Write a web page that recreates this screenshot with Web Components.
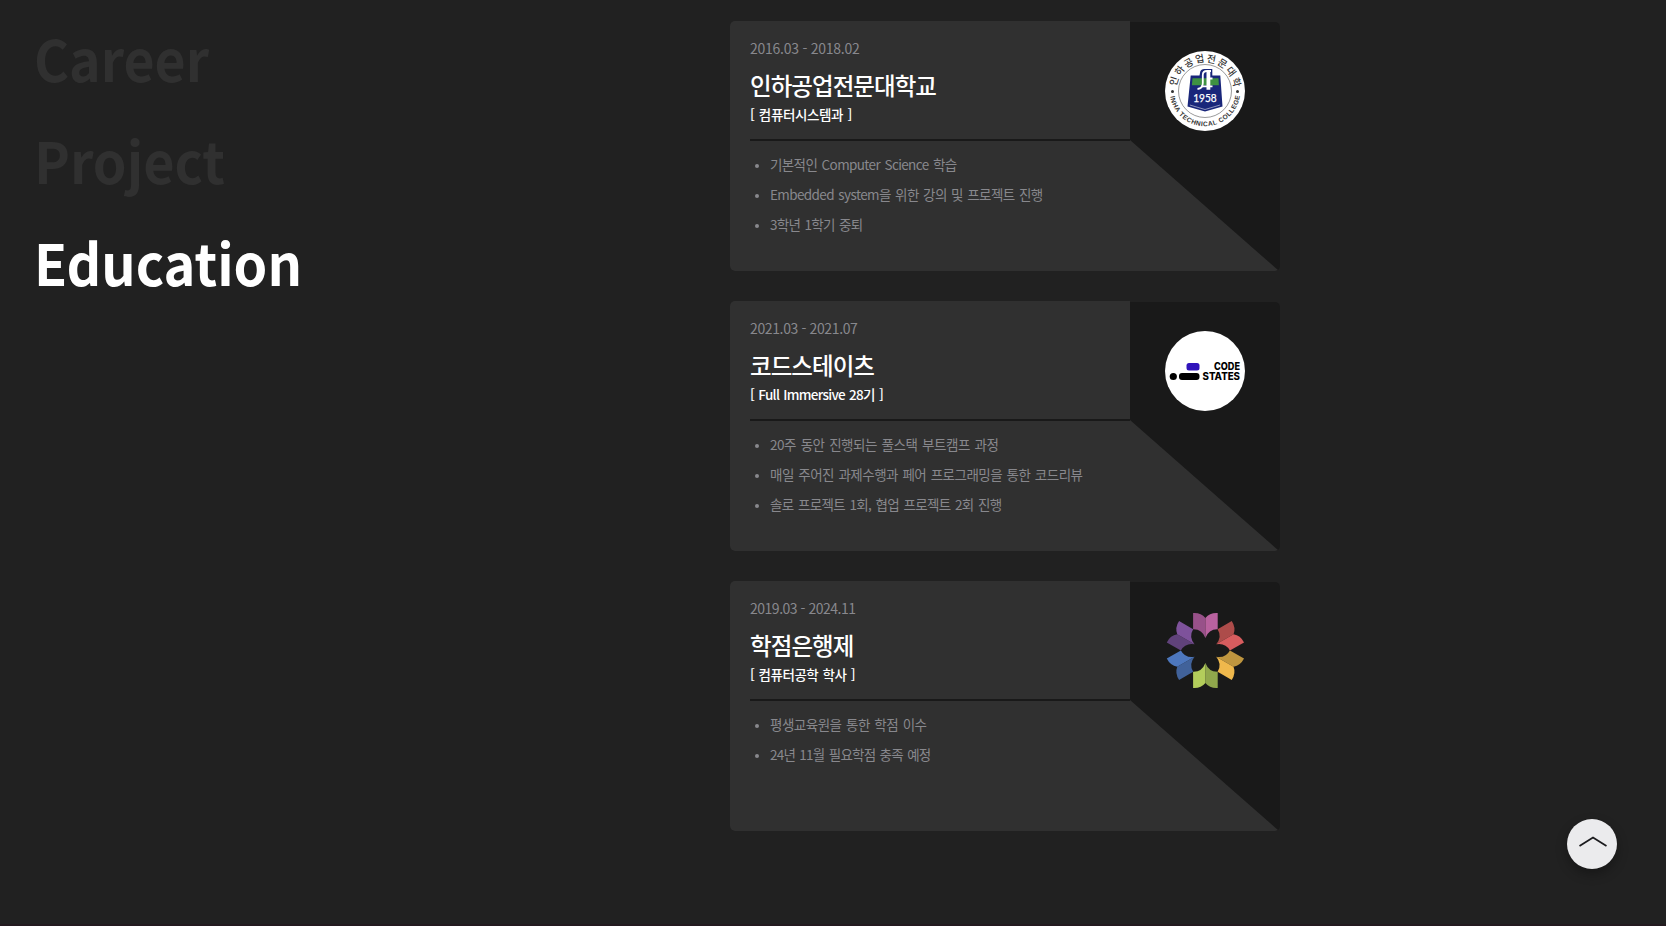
<!DOCTYPE html>
<html lang="ko">
<head>
<meta charset="utf-8">
<title>Education</title>
<style>
html,body{margin:0;height:100%;overflow:hidden;background:#212121;font-family:"Noto Sans CJK KR","Noto Sans",sans-serif}
</style>
</head>
<body>
<resume-page></resume-page>
<script>
const define = (name, html, setup) => {
  const t = document.createElement('template');
  t.innerHTML = html;
  customElements.define(name, class extends HTMLElement {
    constructor() { super(); this.attachShadow({mode: 'open'}).append(t.content.cloneNode(true)); }
    connectedCallback() { if (setup) setup(this, this.shadowRoot); }
  });
};

// One line of text that fills the width given in `w`, by tracking or, with `scale`, by scaling.
define('fit-text', `<style>:host{display:block;white-space:nowrap;line-height:inherit}span{display:inline-block;transform-origin:0 50%}</style><span><slot></slot></span>`, (el, root) => {
  const s = root.querySelector('span'), w = +el.getAttribute('w');
  const natural = s.getBoundingClientRect().width;
  if (el.hasAttribute('scale')) s.style.transform = `scaleX(${(w / natural).toFixed(4)})`;
  else s.style.letterSpacing = ((w - natural) / [...el.textContent].length).toFixed(3) + 'px';
});

define('nav-item', `<style>
:host{display:block;height:102px;line-height:102px;font-size:57px;font-weight:700;color:#303030}
:host([active]){color:#fff}
</style><slot></slot>`);

define('side-nav', `<style>:host{display:block;width:730px;box-sizing:border-box;padding:6px 0 0 34px}</style>
<nav><nav-item><fit-text scale w="175">Career</fit-text></nav-item>
<nav-item><fit-text scale w="191">Project</fit-text></nav-item>
<nav-item active><fit-text scale w="268">Education</fit-text></nav-item></nav>`);

define('edu-card', `<style>
:host{display:block;position:relative;width:550px;height:250px}
.dark{position:absolute;inset:1px 0 0 0;background:#191919;border-radius:5px}
.face{position:absolute;inset:0;background:#303030;border-radius:5px;clip-path:polygon(0 0,400px 0,400px 119px,549px 250px,0 250px)}
.body{position:relative;display:grid;grid-template-columns:400px 150px}
.head{height:118px;margin-left:20px;border-bottom:2px solid #191919;color:#fff;display:flex;flex-direction:column}
.date{font-size:14px;line-height:20px;margin-top:17px;color:#88888d}
.title{font-size:23.500px;line-height:36px;font-weight:500;margin-top:9px}
.sub{font-size:13.500px;line-height:20px;font-weight:500;margin-top:1px;word-spacing:1px}
.logo{display:flex;justify-content:center;padding-top:30px}
.list{padding:8px 0 0 25px}
</style><div class="dark"></div><div class="face"></div>
<div class="body"><div class="head"><div class="date"><slot name="date"></slot></div><div class="title"><slot name="title"></slot></div><div class="sub"><slot name="sub"></slot></div></div>
<div class="logo"><slot name="logo"></slot></div><div class="list"><slot></slot></div></div>`);

define('edu-point', `<style>
:host{display:flex;align-items:center;height:30px;line-height:30px;font-size:13.500px;word-spacing:1.200px;color:#88888d}
i{width:4px;height:4px;border-radius:50%;background:currentColor;margin:3px 11px 0 0}
</style><i></i><slot></slot>`);

define('logo-inha', `<style>:host{display:block;width:80px;height:80px}svg{display:block}</style>
<svg width="80" height="80" viewBox="0 0 80 80">
<circle cx="40" cy="40" r="40" fill="#fff"/><circle cx="40" cy="40" r="26.500" fill="none" stroke="#555" stroke-width=".6"/>
<defs><path id="up" d="M11 40a29 29 0 0 1 58 0"/><path id="lo" d="M4.800 40a35.200 35.200 0 0 0 70.400 0"/></defs>
<g fill="#333">
<text font-size="9.800" font-weight="500" font-family="Noto Sans CJK KR,sans-serif"><textPath href="#up" startOffset="4.500" textLength="83" lengthAdjust="spacing">인하공업전문대학</textPath></text>
<text font-size="6.600" font-weight="700" font-family="Liberation Sans,sans-serif"><textPath href="#lo" startOffset="5.500" textLength="100" lengthAdjust="spacing">INHA TECHNICAL COLLEGE</textPath></text></g>
<circle cx="7.500" cy="40.500" r="1.500" fill="#333"/><circle cx="72.500" cy="40.500" r="1.500" fill="#333"/>
<path d="M25.700 24.600h8.800l.8-4q.8-2.600 4-2.600h8v6.600h8l2.200 31-17.500 5-17.500-5z" fill="#19267a"/>
<path d="M27.500 27.200h26l.4 7h-27z" fill="#3e9142"/>
<path d="M24.800 54l15.200 4.500 15.200-4.500" fill="none" stroke="#fff" stroke-width=".5"/>
<path d="M46 20h-4q-4.200 0-4.200 4v8q0 5.500-5.300 6" fill="none" stroke="#fff" stroke-width="1.800"/>
<path d="M41.500 20h3.800v6.500h2.200v2h-2.200v6h2.200v1.800h-2.200v2.500h-3.800v-2.500H36v-1.800h5.500z" fill="#fff"/>
<text x="28.200" y="50.800" font-size="11.500" textLength="23.500" lengthAdjust="spacingAndGlyphs" fill="#fff" stroke="#fff" stroke-width=".25" font-family="Lato,sans-serif">1958</text></svg>`);

define('logo-code', `<style>:host{display:block;width:80px;height:80px}svg{display:block}</style>
<svg width="80" height="80" viewBox="0 0 80 80"><circle cx="40" cy="40" r="40" fill="#fff"/>
<rect x="21.500" y="32" width="13" height="7.500" rx="2.500" fill="#3014bb"/><rect x="14" y="42" width="20.500" height="7" rx="3" fill="#000"/><circle cx="8.300" cy="45.500" r="3.600"/>
<g font-family="Inter,sans-serif" font-weight="800" font-size="10"><text x="49" y="39" textLength="26" lengthAdjust="spacingAndGlyphs">CODE</text><text x="37.500" y="49" textLength="37.500" lengthAdjust="spacingAndGlyphs">STATES</text></g></svg>`);

define('logo-bank', `<style>:host{display:block;width:80px;height:80px}svg{display:block}</style>
<svg width="80" height="80" viewBox="0 0 80 80"></svg>`, (el, root) => {
  // Six blossoms of two half petals each, one every 60 degrees.
  const pairs = [[0,'#985189','#b9629f'],[60,'#ad4c4a','#d75c5e'],[120,'#bf963f','#efb84c'],[180,'#90a74c','#b3cd5b'],[240,'#41629a','#4d77bd'],[300,'#60427a','#7e529b']];
  root.querySelector('svg').innerHTML = pairs.map(([a, l, r]) =>
    `<g transform="rotate(${a} 40.400 39.500)"><path d="M28.100 2Q36 1.500 40.400 7V27Q37 18 28.100 18.300z" fill="${l}"/><path d="M52.700 2Q44.800 1.500 40.400 7V27Q43.800 18 52.700 18.300z" fill="${r}"/></g>`).join('');
});

define('edu-list', `<style>:host{display:flex;flex-direction:column;gap:30px;padding-top:21px;width:550px}</style>
<edu-card><fit-text slot="date" w="109.500">2016.03 - 2018.02</fit-text><fit-text slot="title" w="186">인하공업전문대학교</fit-text><fit-text slot="sub" w="102">[ 컴퓨터시스템과 ]</fit-text><logo-inha slot="logo"></logo-inha>
<edu-point><fit-text w="186.500">기본적인 Computer Science 학습</fit-text></edu-point><edu-point><fit-text w="272.500">Embedded system을 위한 강의 및 프로젝트 진행</fit-text></edu-point><edu-point><fit-text w="92.500">3학년 1학기 중퇴</fit-text></edu-point></edu-card>
<edu-card><fit-text slot="date" w="107.500">2021.03 - 2021.07</fit-text><fit-text slot="title" w="124">코드스테이츠</fit-text><fit-text slot="sub" w="133">[ Full Immersive 28기 ]</fit-text><logo-code slot="logo"></logo-code>
<edu-point><fit-text w="228.500">20주 동안 진행되는 풀스택 부트캠프 과정</fit-text></edu-point><edu-point><fit-text w="312.500">매일 주어진 과제수행과 페어 프로그래밍을 통한 코드리뷰</fit-text></edu-point><edu-point><fit-text w="231.500">솔로 프로젝트 1회, 협업 프로젝트 2회 진행</fit-text></edu-point></edu-card>
<edu-card><fit-text slot="date" w="105.500">2019.03 - 2024.11</fit-text><fit-text slot="title" w="103.500">학점은행제</fit-text><fit-text slot="sub" w="105">[ 컴퓨터공학 학사 ]</fit-text><logo-bank slot="logo"></logo-bank>
<edu-point><fit-text w="156.500">평생교육원을 통한 학점 이수</fit-text></edu-point><edu-point><fit-text w="160.500">24년 11월 필요학점 충족 예정</fit-text></edu-point></edu-card>`);

define('top-button', `<style>
:host{position:fixed;left:1567px;top:819px;width:50px;height:50px;border-radius:50%;background:#ebebed;box-shadow:0 5px 12px rgba(0,0,0,.3)}
svg{display:block}</style><svg width="50" height="50" viewBox="0 0 50 50"><path d="M12.500 27L26 18.500 39.500 27" fill="none" stroke="#1b1b1e" stroke-width="1.800"/></svg>`);

define('resume-page', `<style>:host{display:flex;height:926px;box-sizing:border-box;border-bottom:2px solid #231a1f}</style><side-nav></side-nav><edu-list></edu-list><top-button></top-button>`);
</script>
</body>
</html>
